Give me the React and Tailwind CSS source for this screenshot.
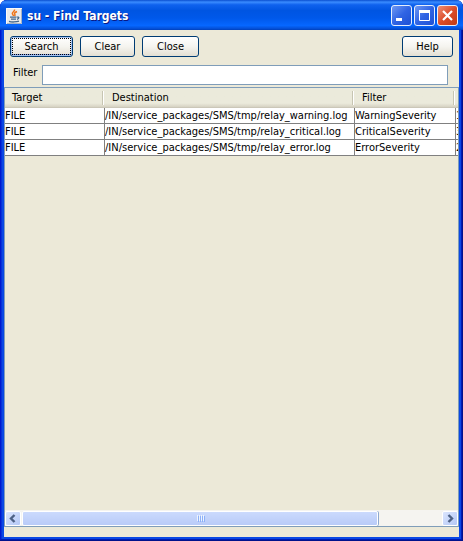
import clsx from "clsx";

const columns = ["Target", "Destination", "Filter", ""];

const rows = [
  ["FILE", "/IN/service_packages/SMS/tmp/relay_warning.log", "WarningSeverity", "1"],
  ["FILE", "/IN/service_packages/SMS/tmp/relay_critical.log", "CriticalSeverity", "3"],
  ["FILE", "/IN/service_packages/SMS/tmp/relay_error.log", "ErrorSeverity", "2"],
];

function JavaIcon() {
  return (
    <svg width="16" height="16" viewBox="0 0 16 16" fill="none" aria-hidden="true">
      <rect width="16" height="16" fill="#e9eaec" />
      <path d="M.5 15.5V.5h15" stroke="#fafafa" />
      <path d="M15.5 1v14.5H1" stroke="#a9b4c4" />
      <path d="M8.5 1.5c.8 1.8-2.6 2.6-2.2 4.2.2.9 1.3 1.2 1.2 2.3M11 3.5C8.8 4.5 8 5.2 8.8 6.3c.5.7.2 1.3-.3 1.7" stroke="#ee7418" strokeWidth="1.5" />
      <path d="M4 9.2h6.5M5 11.2h5M11 9.2c2.4-.6 2.4 1.6 0 2.2M3 13.4c2 .8 7.5.8 10-.2" stroke="#44688c" strokeWidth="1.3" />
    </svg>
  );
}

function CaptionButton({ label, danger, children }) {
  return (
    <button
      aria-label={label}
      className={clsx(
        "flex h-[21px] w-[21px] items-center justify-center rounded-[3px] border border-[#e6eefc]",
        danger
          ? "bg-linear-to-br from-[#ec8e74] via-[#dc4c28] to-[#c13a14]"
          : "bg-linear-to-br from-[#6f97f2] via-[#3064e4] to-[#1e50d4]"
      )}
    >
      <svg width="19" height="19" viewBox="0 0 19 19" fill="none">
        {children}
      </svg>
    </button>
  );
}

function PushButton({ focused, className, children }) {
  return (
    <button
      className={clsx(
        "h-[21px] rounded-[3px] border border-[#003c74] bg-linear-to-b from-white via-[#f5f4ef] to-[#e3dfd3] p-px",
        focused && "shadow-[inset_0_0_0_1px_#a9c3f0,inset_0_-2px_0_#7f9fe6]",
        className
      )}
    >
      <span
        className={clsx(
          "flex h-full items-center justify-center border border-dotted",
          focused ? "border-black" : "border-transparent"
        )}
      >
        {children}
      </span>
    </button>
  );
}

function ScrollArrow({ label, path }) {
  return (
    <button
      aria-label={label}
      className="h-[15px] w-4 shrink-0 rounded-[2px] border border-white bg-linear-to-br from-[#dbe5fd] to-[#b4c8f6]"
    >
      <svg width="14" height="13" viewBox="0 0 14 13" fill="none">
        <path d={path} stroke="#4d6185" strokeWidth="2.4" />
      </svg>
    </button>
  );
}

export default function App() {
  return (
    <div className="h-screen bg-white font-['DejaVu_Sans_Condensed','DejaVu_Sans',sans-serif] text-[11px] leading-[15px] text-black [font-stretch:condensed]">
      <div className="flex h-full flex-col overflow-hidden rounded-t-[7px] bg-[#0a48e4] shadow-[inset_-1px_-1px_0_#00128c,inset_1px_0_0_#0019cf,inset_-2px_-2px_0_#001cb4,inset_2px_0_0_#0831d9]">
        {/* Title bar */}
        <header className="flex h-[30px] shrink-0 items-center gap-[5px] bg-[linear-gradient(180deg,#0a4fd0_0%,#3a8cff_7%,#0f62ee_16%,#0055e2_35%,#0058ea_60%,#0667ff_85%,#0450d8_95%,#0040bb_100%)] pr-[5px] pl-[6px] pt-px">
          <JavaIcon />
          <h1 className="flex-1 text-xs font-bold text-white [text-shadow:1px_1px_0_#0a1883]">
            su - Find Targets
          </h1>
          <div className="flex gap-[2px]">
            <CaptionButton label="Minimize">
              <path d="M4 13.5h6" stroke="#fff" strokeWidth="3" />
            </CaptionButton>
            <CaptionButton label="Maximize">
              <path d="M4.5 5v9.5h10V5" stroke="#fff" />
              <path d="M4 5.5h11" stroke="#fff" strokeWidth="3" />
            </CaptionButton>
            <CaptionButton label="Close window" danger>
              <path d="M5 5l9 9M14 5l-9 9" stroke="#fff" strokeWidth="2.2" />
            </CaptionButton>
          </div>
        </header>

        <main className="mx-1 mb-1 flex min-h-0 flex-1 flex-col bg-[#ece9d8] pb-[10px]">
          {/* Toolbar */}
          <div className="flex gap-[7px] px-[6px] pt-[6px]">
            <PushButton focused className="w-[63px]">Search</PushButton>
            <PushButton className="w-[55px]">Clear</PushButton>
            <PushButton className="w-[57px]">Close</PushButton>
            <PushButton className="ml-auto w-[51px]">Help</PushButton>
          </div>

          {/* Filter */}
          <div className="flex gap-[5px] pt-2 pr-[11px] pb-[2px] pl-[9px]">
            <label htmlFor="filter">Filter</label>
            <input
              id="filter"
              type="text"
              className="h-5 min-w-0 flex-1 border border-[#7f9db9] bg-white px-1 outline-none"
            />
          </div>

          {/* Results */}
          <section className="flex min-h-0 flex-1 flex-col border border-[#7f9db9]">
            <div className="min-h-0 flex-1 overflow-hidden">
              <table className="w-[551px] table-fixed border-separate border-spacing-0">
                <colgroup>
                  <col className="w-[100px]" />
                  <col className="w-[250px]" />
                  <col className="w-[101px]" />
                  <col className="w-[100px]" />
                </colgroup>
                <thead>
                  <tr className="h-5">
                    {columns.map((name, i) => (
                      <th
                        key={i}
                        className="border-b border-[#cbc7b8] bg-linear-to-b from-[#ebeadb] from-80% to-[#d6d2c2] p-0 text-left font-normal"
                      >
                        <div className="flex h-[15px] items-center pr-px pl-[7px]">
                          <span className="flex-1">{name}</span>
                          <span className="h-[14px] w-[2px] border-r border-l border-r-white border-l-[#c7c5b2]" />
                        </div>
                      </th>
                    ))}
                  </tr>
                </thead>
                <tbody>
                  {rows.map((row) => (
                    <tr key={row[1]} className="h-4">
                      {row.map((cell, i) => (
                        <td
                          key={i}
                          className="border-r border-b border-[#808080] bg-white p-0 leading-[15px] whitespace-nowrap"
                        >
                          {cell}
                        </td>
                      ))}
                    </tr>
                  ))}
                </tbody>
              </table>
            </div>

            {/* Horizontal scroll bar */}
            <div className="flex h-4 shrink-0 items-center gap-px bg-[#f5f4f0]">
              <ScrollArrow label="Scroll left" path="M8.5 3L5 6.5L8.5 10" />
              <div className="flex h-full min-w-0 flex-1 items-center">
                <div className="flex h-[15px] w-[85%] items-center justify-center gap-px rounded-[2px] border border-white bg-linear-to-b from-[#cbdafd] to-[#b9cbf8] shadow-[1px_0_0_#8ea8cf]">
                  {[0, 1, 2, 3].map((n) => (
                    <span key={n} className="h-[6px] w-px bg-[#eef4fe] shadow-[1px_1px_0_#8cb0f8]" />
                  ))}
                </div>
              </div>
              <ScrollArrow label="Scroll right" path="M5.5 3L9 6.5L5.5 10" />
            </div>
          </section>
        </main>
      </div>
    </div>
  );
}
